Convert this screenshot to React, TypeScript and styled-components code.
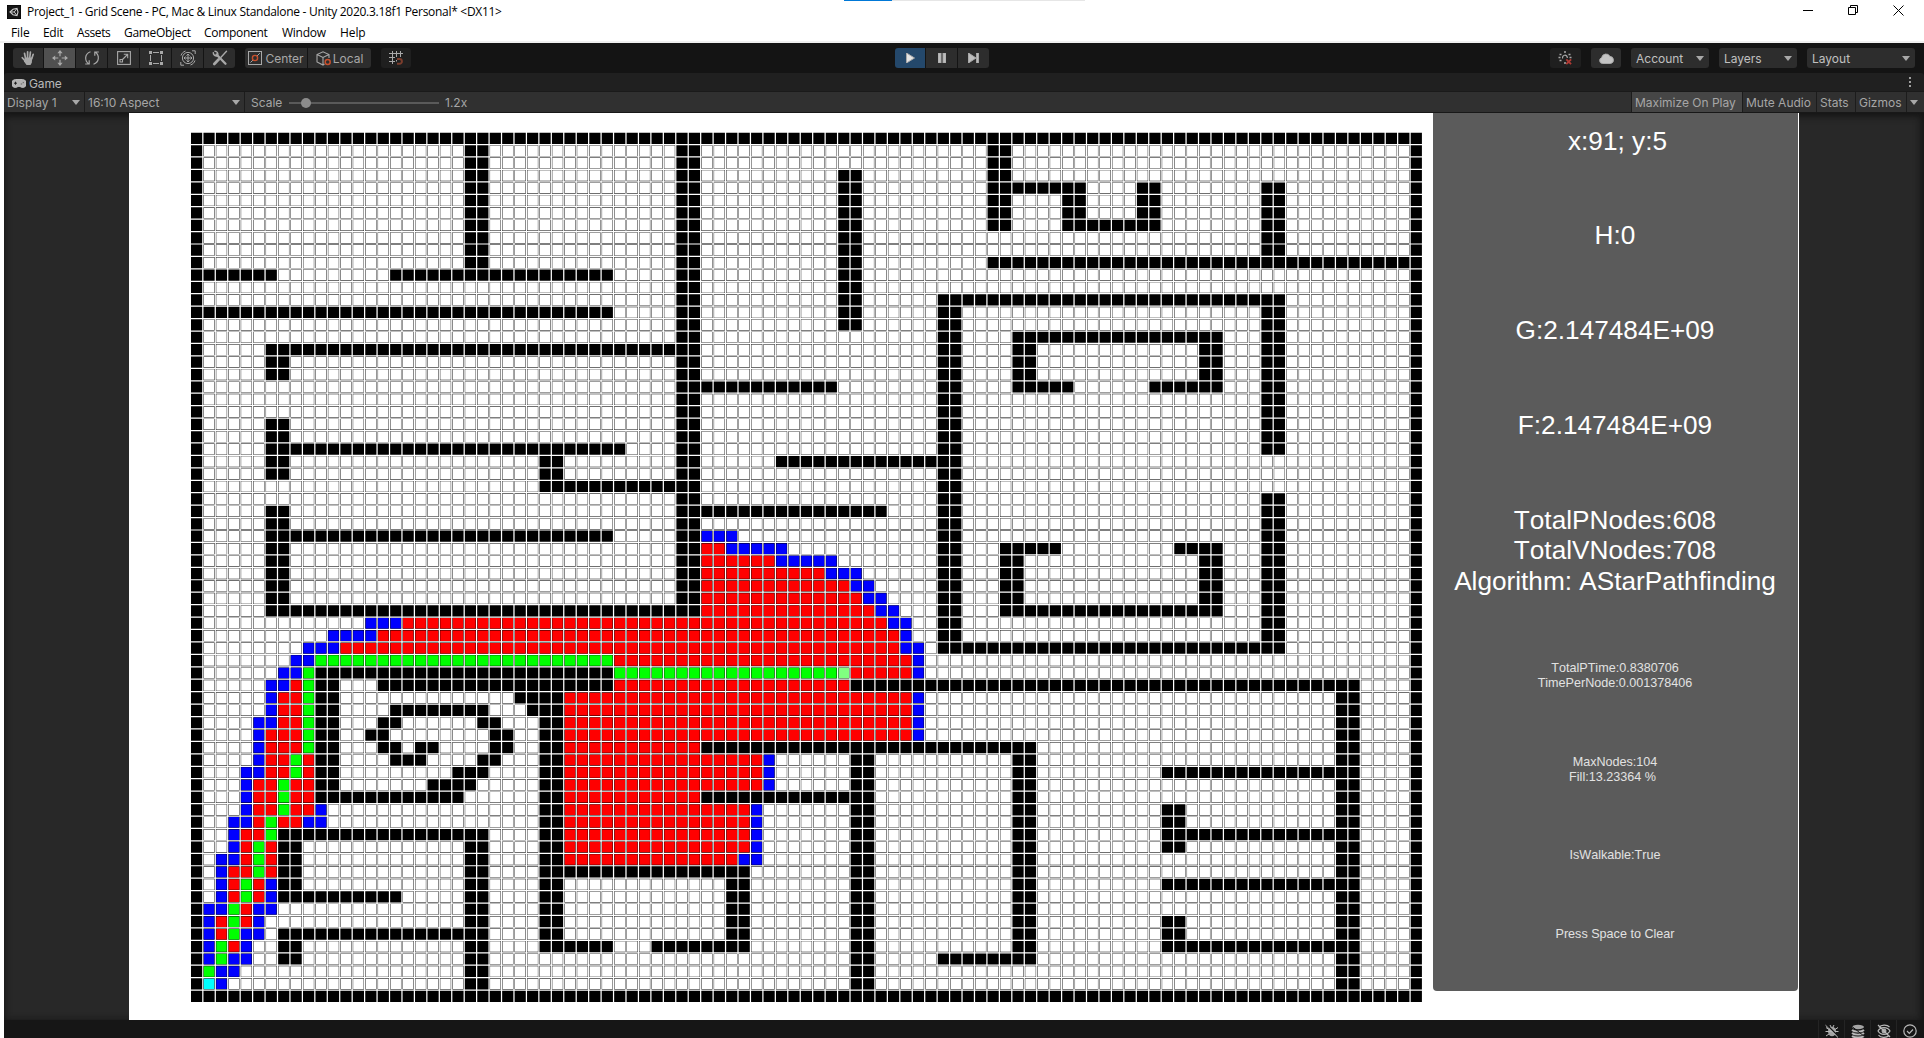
import React from "react";
import styled, { createGlobalStyle } from "styled-components";

const GlobalStyle = createGlobalStyle`
  html, body { margin: 0; padding: 0; background: #fff; }
  * { box-sizing: border-box; }
`;

/* ---------- grid map data ---------- */

const COLS = 99;
const ROWS = 70;
const PITCH_X = 12.446;
const PITCH_Y = 12.435;
const CELL = 11.2;
const EDGE = 0.36;

type Kind = "free" | "wall" | "open" | "closed" | "path" | "goal" | "start";

// [row from, row to, column from, column to]
type Block = [number, number, number, number];

const walls: Block[] = [
  [0, 0, 0, 98], [69, 69, 0, 98], [0, 69, 0, 0], [0, 69, 98, 98],
  [1, 10, 22, 23], [11, 11, 1, 6], [11, 11, 16, 33], [14, 14, 1, 33],
  [17, 17, 6, 38], [18, 19, 6, 7], [23, 27, 6, 7], [25, 25, 8, 34],
  [26, 28, 28, 29], [28, 28, 30, 38], [30, 38, 6, 7], [32, 32, 8, 33],
  [38, 38, 8, 38], [1, 38, 39, 40],
  [20, 20, 41, 51], [26, 26, 47, 59], [30, 30, 41, 55], [3, 15, 52, 53],
  [1, 7, 64, 65], [4, 4, 66, 71], [5, 7, 70, 71], [7, 7, 72, 77], [4, 7, 76, 77],
  [10, 10, 64, 98], [4, 9, 86, 87],
  [13, 13, 60, 87], [13, 41, 60, 61], [41, 41, 60, 87], [13, 25, 86, 87], [29, 41, 86, 87],
  [16, 16, 66, 82], [17, 20, 66, 67], [20, 20, 68, 70], [17, 20, 81, 82], [20, 20, 77, 80],
  [33, 33, 65, 69], [34, 38, 65, 66], [38, 38, 67, 82], [33, 33, 79, 82], [34, 38, 81, 82],
  [43, 43, 10, 33], [44, 53, 10, 11], [44, 44, 15, 33], [53, 53, 12, 21],
  [45, 45, 26, 29], [46, 46, 27, 29], [47, 65, 28, 29],
  [46, 46, 16, 23], [47, 47, 15, 16], [47, 47, 23, 24], [48, 48, 14, 15], [48, 49, 24, 25],
  [49, 49, 15, 16], [49, 49, 18, 19], [50, 50, 16, 18], [50, 50, 23, 24],
  [51, 51, 21, 23], [52, 52, 19, 22],
  [56, 56, 7, 23], [57, 68, 22, 23], [57, 60, 7, 8], [61, 61, 7, 16], [64, 64, 7, 21], [65, 66, 7, 8],
  [59, 59, 30, 44], [60, 65, 43, 44], [65, 65, 30, 33], [65, 65, 37, 42],
  [44, 44, 53, 93], [45, 68, 92, 93], [49, 49, 41, 67], [50, 66, 66, 67], [66, 66, 60, 65],
  [50, 68, 53, 54], [53, 53, 41, 52],
  [51, 51, 78, 91], [54, 57, 78, 79], [56, 56, 80, 91], [60, 60, 78, 91],
  [63, 65, 78, 79], [65, 65, 80, 91],
];

const frontier: Block[] = [
  [32, 32, 41, 43], [33, 33, 43, 47], [34, 34, 47, 51], [35, 35, 51, 53], [36, 36, 53, 54],
  [37, 37, 54, 55], [38, 38, 55, 56], [39, 39, 56, 57], [40, 40, 57, 57], [41, 41, 57, 58],
  [42, 43, 58, 58], [45, 48, 58, 58],
  [39, 39, 14, 16], [40, 40, 11, 14], [41, 41, 9, 11], [42, 42, 8, 9], [43, 43, 7, 8],
  [44, 44, 6, 7], [45, 46, 6, 6], [47, 47, 5, 6], [48, 50, 5, 5], [51, 51, 4, 5], [52, 54, 4, 4],
  [54, 54, 10, 10], [55, 55, 3, 4], [55, 55, 9, 10], [56, 57, 3, 3], [58, 58, 2, 3], [59, 61, 2, 2],
  [60, 61, 6, 6], [62, 62, 1, 2], [62, 62, 5, 6], [63, 66, 1, 1], [63, 63, 5, 5], [64, 64, 4, 5],
  [65, 65, 4, 4], [66, 66, 3, 4], [67, 67, 2, 3], [68, 68, 2, 2],
  [50, 52, 46, 46], [54, 58, 45, 45], [58, 58, 44, 44],
];

const visited: Block[] = [
  [33, 33, 41, 42], [34, 34, 41, 46], [35, 35, 41, 50], [36, 36, 41, 52], [37, 37, 41, 53],
  [38, 38, 41, 54], [39, 39, 17, 55], [40, 40, 15, 56], [41, 41, 12, 56], [42, 42, 34, 57],
  [43, 43, 53, 57], [44, 44, 34, 52], [45, 48, 30, 57], [49, 49, 30, 40], [50, 52, 30, 45],
  [53, 53, 30, 40], [54, 57, 30, 44], [58, 58, 30, 43],
  [44, 44, 8, 8], [45, 47, 7, 8], [48, 49, 6, 8], [50, 51, 6, 7], [50, 51, 9, 9],
  [52, 54, 5, 6], [52, 54, 8, 9], [55, 55, 5, 5], [55, 55, 7, 8], [56, 56, 4, 5], [57, 58, 4, 4],
  [57, 59, 6, 6], [59, 59, 3, 4], [60, 61, 3, 3], [60, 61, 5, 5], [62, 63, 4, 4], [63, 64, 2, 2],
  [65, 65, 3, 3],
];

const route: Block[] = [
  [42, 42, 10, 33], [43, 43, 34, 51], [43, 49, 9, 9], [50, 51, 8, 8], [52, 54, 7, 7],
  [55, 56, 6, 6], [57, 59, 5, 5], [60, 61, 4, 4], [62, 64, 3, 3], [65, 66, 2, 2], [67, 67, 1, 1],
];

const colours: Record<Kind, string> = {
  free: "#fff",
  wall: "#000",
  open: "#0000ff",
  closed: "#ff0000",
  path: "#00ff00",
  goal: "#80ff80",
  start: "#00ffff",
};

const board: Kind[][] = Array.from({ length: ROWS }, () => Array<Kind>(COLS).fill("free"));

const paint = (blocks: Block[], kind: Kind) =>
  blocks.forEach(([r0, r1, c0, c1]) => {
    for (let r = r0; r <= r1; r++) for (let c = c0; c <= c1; c++) board[r][c] = kind;
  });

paint(walls, "wall");
paint(visited, "closed");
paint(frontier, "open");
paint(route, "path");
paint([[43, 43, 52, 52]], "goal");
paint([[68, 68, 1, 1]], "start");

const square = (c: number, r: number, inset: number) => {
  const s = (CELL - inset * 2).toFixed(2);
  const x = (1.0 + c * PITCH_X + inset).toFixed(2);
  const y = (0.7 + r * PITCH_Y + inset).toFixed(2);
  return `M${x} ${y}h${s}v${s}h-${s}z`;
};

const frames = board.map((row, r) => row.map((_, c) => square(c, r, 0)).join("")).join("");
const fills = (kind: Kind) =>
  board.map((row, r) => row.map((k, c) => (k === kind ? square(c, r, EDGE) : "")).join("")).join("");

const kinds: Kind[] = ["free", "open", "closed", "path", "goal", "start"];

const GridMap = () => (
  <MapSvg width="1236" height="873" viewBox="0 0 1236 873">
    <path d={frames} fill="#000" />
    {kinds.map((k) => (
      <path key={k} d={fills(k)} fill={colours[k]} />
    ))}
  </MapSvg>
);

/* ---------- window frame ---------- */

const Window = styled.div`
  width: 1924px;
  height: 1038px;
  overflow: hidden;
  display: flex;
  flex-direction: column;
  background: #fff;
  font-family: Inter, "Liberation Sans", sans-serif;
`;

const LoadTrack = styled.div`
  height: 1px;
  width: 241px;
  margin-left: 844px;
  background: #e6e6e6;
`;
const LoadBar = styled.div`
  height: 1px;
  width: 48px;
  background: #0078d7;
`;

const Caption = styled.div`
  display: flex;
  height: 23px;
  padding: 0 0 2px 7px;
  align-items: center;
  font: 12px "Open Sans", "Noto Sans", sans-serif;
  color: #000;
`;
const CaptionText = styled.span`
  margin-left: 6px;
  letter-spacing: -0.29px;
  white-space: pre;
`;
const CaptionButtons = styled.div`
  margin-left: auto;
  display: flex;
  gap: 35px;
  padding-right: 20px;
  margin-top: -2px;
`;

const MenuBar = styled.nav`
  display: flex;
  height: 19px;
  padding-left: 11px;
  align-items: center;
  border-bottom: 2px solid #f0f0f0;
  font: 12px "Open Sans", "Noto Sans", sans-serif;
  color: #000;
`;
const MenuItem = styled.span<{ $w: number; $track: number }>`
  width: ${(p) => p.$w}px;
  letter-spacing: ${(p) => p.$track}px;
  white-space: nowrap;
`;

const Editor = styled.div`
  margin-left: 4px;
  flex: 1;
  display: flex;
  flex-direction: column;
  background: #141414;
  color: #b9b9b9;
  font-size: 12px;
`;

/* ---------- toolbar ---------- */

const Toolbar = styled.div`
  height: 30px;
  padding: 5px 9px 5px 9px;
  display: flex;
`;
const ToolGroup = styled.div<{ $ml?: number }>`
  display: flex;
  gap: 1px;
  margin-left: ${(p) => p.$ml ?? 0}px;
  border-radius: 3px;
  overflow: hidden;
`;
const ToolButton = styled.div<{ $w?: number; $bg?: string; $color?: string }>`
  width: ${(p) => p.$w ?? 31}px;
  height: 20px;
  display: flex;
  align-items: center;
  justify-content: center;
  gap: 2px;
  background: ${(p) => p.$bg ?? "#2d2d2d"};
  color: ${(p) => p.$color ?? "#a8a8a8"};
  white-space: nowrap;
`;
const DropButton = styled.div<{ $w: number }>`
  width: ${(p) => p.$w}px;
  height: 20px;
  margin-left: 10px;
  padding: 0 5px;
  display: flex;
  align-items: center;
  justify-content: space-between;
  background: #2d2d2d;
  border-radius: 3px;
  color: #c0c0c0;
`;
const Arrow = styled.i`
  border: 4px solid transparent;
  border-top: 5px solid #a8a8a8;
  border-bottom: 0;
`;

/* ---------- game tab ---------- */

const TabRow = styled.div`
  height: 19px;
  background: #202020;
  display: flex;
  align-items: center;
  padding: 3px 13px 0 8px;
  border-bottom: 1px solid #1a1a1a;
  border-radius: 3px 3px 0 0;
`;
const TabName = styled.span`
  margin-left: 3px;
  letter-spacing: -0.15px;
`;
const Dots = styled.div`
  margin-left: auto;
  margin-top: -3px;
  display: grid;
  gap: 2px;
`;
const Dot = styled.i`
  width: 2px;
  height: 2px;
  background: #a0a0a0;
`;

const ViewBar = styled.div`
  height: 21px;
  background: #303030;
  border-bottom: 1px solid #181818;
  display: flex;
  color: #a6a6a6;
`;
const ViewItem = styled.div<{ $w: number; $active?: boolean; $end?: boolean }>`
  width: ${(p) => p.$w}px;
  padding: 1px 4px 0 3px;
  display: flex;
  align-items: center;
  justify-content: space-between;
  white-space: nowrap;
  background: ${(p) => (p.$active ? "#464646" : "transparent")};
  border-right: ${(p) => (p.$end ? "0" : "1px solid #1c1c1c")};
`;
const ScaleBox = styled.div`
  display: flex;
  align-items: center;
  padding: 1px 0 0 6px;
  flex: 1;
  border-right: 1px solid #1c1c1c;
`;
const ScaleLabel = styled.span`
  width: 38px;
`;
const Track = styled.div`
  width: 150px;
  height: 2px;
  margin-right: 6px;
  background: #5a5a5a;
  display: flex;
  align-items: center;
  padding-left: 12px;
`;
const Knob = styled.i`
  width: 10px;
  height: 10px;
  border-radius: 50%;
  background: #8c8c8c;
`;

/* ---------- game view ---------- */

const GameView = styled.main`
  height: 907px;
  background: #282828;
  box-shadow: inset 0 3px 7px #151515, inset -4px 0 6px #1c1c1c;
  display: flex;
  padding-left: 125px;
`;
const Camera = styled.div`
  width: 1670px;
  height: 907px;
  background: #fff;
  display: flex;
  align-items: flex-start;
`;
const MapSvg = styled.svg`
  display: block;
  flex: none;
  margin: 19px 7px 0 61px;
`;
const InfoPanel = styled.aside`
  width: 365px;
  height: 878px;
  background: #5b5b5b;
  border-radius: 0 0 4px 4px;
  display: flex;
  flex-direction: column;
  align-items: center;
  gap: 64.6px;
  padding: 12.5px 1px 0 0;
  color: #fff;
  font-family: "Liberation Sans", Arial, sans-serif;
  font-kerning: none;
  text-align: center;
`;
const Readout = styled.div<{ $small?: boolean; $shift?: number; $pull?: number }>`
  font-size: ${(p) => (p.$small ? 12.6 : 26.2)}px;
  line-height: ${(p) => (p.$small ? 15 : 30.3)}px;
  color: ${(p) => (p.$small ? "#e2e2e2" : "#fff")};
  padding-left: ${(p) => p.$shift ?? 0}px;
  margin-top: ${(p) => -(p.$pull ?? 0)}px;
`;
const Line = styled.div<{ $back?: number }>`
  white-space: pre;
  padding-right: ${(p) => p.$back ?? 0}px;
`;

const StatusBar = styled.footer`
  height: 18px;
  background: #161616;
  display: flex;
  justify-content: flex-end;
  padding-right: 2px;
`;
const StatusItem = styled.div`
  width: 26px;
  height: 18px;
  border-left: 1px solid #242424;
  display: flex;
  align-items: center;
  justify-content: center;
  padding-top: 3px;
`;

/* ---------- icons ---------- */

const Ico = styled.svg`
  display: block;
  flex: none;
  fill: none;
  stroke: currentColor;
`;

const UnityMark = () => (
  <Ico width="14" height="14" viewBox="0 0 14 14" stroke="none">
    <rect width="14" height="14" fill="#161616" />
    <path d="M3 7 6 4.300 10 3.500 11 7 10 10.500 6 9.700Z" stroke="#ccc" strokeWidth="1.100" />
    <path d="M7.300 7H3.500M7.300 7l2.200-3M7.300 7l2.200 3" stroke="#ccc" strokeWidth="1" />
  </Ico>
);
const Hand = () => (
  <Ico width="16" height="16" viewBox="0 0 16 16" strokeLinecap="round">
    <path d="M5.600 8.500 4.500 3.300M7.600 7.500V1.800M9.800 7.500l.6-5.300M11.700 8.700l1.500-4.400M5.200 11 2.300 7.700" strokeWidth="1.700" />
    <path d="M5 7.500h7.300l-.5 5.200L10.500 15H6.500L4 11.500Z" fill="currentColor" stroke="none" />
  </Ico>
);
const Move = () => (
  <Ico width="16" height="16" viewBox="0 0 16 16">
    <path d="M8 2.500v3.800M8 9.700v3.800M2.500 8h3.800M9.700 8h3.800" strokeWidth="1.200" />
    <path d="M8 0l2.600 3.200H5.400ZM8 16l2.600-3.200H5.400ZM0 8l3.200-2.600v5.200ZM16 8l-3.200-2.600v5.200Z" fill="currentColor" stroke="none" />
  </Ico>
);
const Rotate = () => (
  <Ico width="16" height="16" viewBox="0 0 16 16" strokeWidth="1.200">
    <path d="M6.500 1.800C.5 4 .3 10.500 4.700 14M1.200 14h4V10.200M9.500 14.200c6-2.200 6.200-8.700 1.800-12.200M14.800 2h-4v3.800" />
  </Ico>
);
const ScaleIcon = () => (
  <Ico width="14" height="14" viewBox="0 0 14 14" strokeWidth="1.100">
    <rect x=".6" y=".6" width="12.800" height="12.800" />
    <path d="M3 11h2.500V8.500H3ZM5.500 8.500l5-5M6.800 3.300h3.900v3.900" />
  </Ico>
);
const RectTool = () => (
  <Ico width="14" height="14" viewBox="0 0 14 14" strokeWidth="1">
    <path d="M4 1.500h6M4 12.500h6M1.500 4v6M12.500 4v6" />
    <path d="M0 0h3v3H0ZM11 0h3v3h-3ZM0 11h3v3H0ZM11 11h3v3h-3Z" fill="currentColor" stroke="none" />
  </Ico>
);
const Transform = () => (
  <Ico width="16" height="16" viewBox="0 0 16 16" strokeWidth="1">
    <circle cx="8" cy="8" r="5.600" />
    <path d="M8 4v8M4 8h8M6.500 5.500 8 4l1.500 1.500M6.500 10.500 8 12l1.500-1.500M5.500 6.500 4 8l1.500 1.500M10.500 6.500 12 8l-1.500 1.500M12 .8h3.200V4M.8 12v3.200H4M1 5.500C2 3 3 2 5.500 1M15 10.500c-1 2.500-2 3.500-4.500 4.500" />
  </Ico>
);
const Tools = () => (
  <Ico width="16" height="16" viewBox="0 0 16 16" strokeLinecap="round">
    <path d="M4.500 4.500 13.500 13.700" strokeWidth="2.300" />
    <path d="M1.300 2.800a3 3 0 0 0 4.200 2.900M3 1.200a3 3 0 0 1 2.800 3.700" strokeWidth="1.500" />
    <path d="m14.500 1.300-5.500 5.900" strokeWidth="1.400" />
    <path d="m6.600 9.600-4.300 4.300" strokeWidth="2.800" />
  </Ico>
);
const PivotIcon = () => (
  <Ico width="15" height="14" viewBox="0 0 15 14" strokeWidth="1">
    <rect x=".5" y=".5" width="13" height="13" />
    <path d="M2.500 11.500 5 9M9 5l2.800-2.800" />
    <circle cx="7" cy="7" r="2.600" stroke="#c8502d" strokeWidth="1.400" />
  </Ico>
);
const CubeIcon = () => (
  <Ico width="15" height="15" viewBox="0 0 15 15" strokeWidth="1.100">
    <path d="M8.500 13 7 14 1 11V3.500L7 .8l6 2.700V7M1 3.500l6 3 6-3M7 6.500V14" />
    <circle cx="11.700" cy="11" r="2.500" stroke="#c8502d" strokeWidth="1.500" />
  </Ico>
);
const SnapIcon = () => (
  <Ico width="14" height="14" viewBox="0 0 14 14" strokeWidth="1" stroke="#7a7a7a">
    <path d="M3.500 0v13M7.500 0v6M11.500 0v6M0 2.500h14M0 6.500h6M0 10.500h6M7.500 9v1.500" />
    <path d="M8 8h2.500a2.400 2.400 0 0 1 0 4.800H8" stroke="#7c3d2c" strokeWidth="2" />
  </Ico>
);
const Play = () => (
  <Ico width="9" height="10" viewBox="0 0 9 10" stroke="none">
    <path d="M.5 0 8.500 5 .5 10Z" fill="#e4e4e4" />
  </Ico>
);
const Pause = () => (
  <Ico width="8" height="10" viewBox="0 0 8 10" stroke="none">
    <path d="M0 0h3v10H0ZM5 0h3v10H5Z" fill="#bdbdbd" />
  </Ico>
);
const Step = () => (
  <Ico width="11" height="10" viewBox="0 0 11 10" stroke="none">
    <path d="M.5 0 8 5 .5 10ZM8.600 0h2v10h-2Z" fill="#bdbdbd" />
  </Ico>
);
const Activity = () => (
  <Ico width="15" height="14" viewBox="0 0 15 14" stroke="#6a6a6a">
    <path d="M4.700 7.500a2.400 2.400 0 1 1 4.600-.5" strokeWidth="1.200" />
    <path d="M6 1h2M1.500 3.500h2M10.500 3.500h2M.5 6.500h2M11.500 6.500h2M1.500 9.500h2M6 12h2" strokeWidth="1.500" />
    <path d="m8.300 8.300 4.800 4.800M13.100 8.300l-4.800 4.800" stroke="#b03a34" strokeWidth="1.800" />
  </Ico>
);
const Cloud = () => (
  <Ico width="15" height="11" viewBox="0 0 15 11" stroke="none">
    <path d="M3.300 10.500A3 3 0 0 1 2.600 4.700 4.500 4.500 0 0 1 11 3.400a3.600 3.600 0 0 1 .7 7.100Z" fill="#c4c4c4" />
  </Ico>
);
const Pad = () => (
  <Ico width="14" height="9" viewBox="0 0 14 9" stroke="none">
    <path d="M3.500.5h7a3.500 3.900 0 0 1 0 8c-1.400 0-2-1.300-3.500-1.300S4.900 8.500 3.500 8.500a3.500 3.900 0 0 1 0-8Z" fill="#b4b4b4" />
    <path d="M2 4.200h3M3.500 2.700v3" stroke="#202020" />
    <circle cx="9.300" cy="5" r=".9" fill="#202020" />
    <circle cx="11.200" cy="3.600" r=".9" fill="#202020" />
  </Ico>
);
const BugOff = () => (
  <Ico width="14" height="14" viewBox="0 0 14 14" stroke="#a4a4a4">
    <ellipse cx="7" cy="7.500" rx="4" ry="4.800" fill="#a4a4a4" stroke="none" />
    <path d="M1 3.500l3 2M13 3.500l-3 2M.5 7.500h13M1 12l3-2M13 12l-3-2M5 1l1 2M9 1 8 3" />
    <path d="m1.500.5 12.500 12.500" stroke="#161616" strokeWidth="1.300" />
    <path d="m.5 1.200 12.500 12.300" />
  </Ico>
);
const StackOff = () => (
  <Ico width="14" height="14" viewBox="0 0 14 14" stroke="#a4a4a4">
    <ellipse cx="7" cy="3" rx="6" ry="2.200" fill="#a4a4a4" stroke="none" />
    <path d="M1 6c2.500 2.200 9.500 2.200 12 0M1 9c2.500 2.200 9.500 2.200 12 0M1 12c2.500 2 9.500 2 12 0" strokeWidth="1.900" />
    <path d="m1 2.500 12.500 10" stroke="#161616" strokeWidth="1" />
  </Ico>
);
const EyeOff = () => (
  <Ico width="14" height="14" viewBox="0 0 14 14" stroke="#a4a4a4">
    <path d="M1 7c2.500-4.500 9.500-4.500 12 0-2.500 4.500-9.500 4.500-12 0ZM2 3.500C4 .5 10 .5 12.500 3M1.500 11c2 3 8 3 10.500.5" strokeWidth="1.200" />
    <circle cx="7" cy="7" r="2" fill="#a4a4a4" />
    <path d="m1 1 12 12" strokeWidth="1.200" />
  </Ico>
);
const CheckRing = () => (
  <Ico width="14" height="14" viewBox="0 0 14 14" stroke="#a4a4a4">
    <circle cx="7" cy="7" r="6.200" strokeWidth="1.200" />
    <path d="m4 7 2.300 2.300L10 5.500" strokeWidth="1.200" />
  </Ico>
);

/* ---------- page ---------- */

const menu: [string, number, number][] = [
  ["File", 32, -0.1], ["Edit", 34, -0.3], ["Assets", 47, -0.4], ["GameObject", 80, -0.3],
  ["Component", 78, -0.3], ["Window", 58, -0.25], ["Help", 40, -0.1],
];

export default function App() {
  return (
    <>
      <GlobalStyle />
      <Window>
        <LoadTrack>
          <LoadBar />
        </LoadTrack>
        <Caption>
          <UnityMark />
          <CaptionText>{"Project_1 - Grid Scene - PC, Mac & Linux Standalone - Unity 2020.3.18f1 Personal* <DX11>"}</CaptionText>
          <CaptionButtons>
            <Ico width="10" height="10" viewBox="0 0 10 10" stroke="#000"><path d="M0 5.500h10" /></Ico>
            <Ico width="10" height="10" viewBox="0 0 10 10" stroke="#000"><path d="M.5 2.500h7v7h-7ZM2.500 2.500v-2h7v7h-2" /></Ico>
            <Ico width="11" height="11" viewBox="0 0 11 11" stroke="#000"><path d="m.5.5 10 10M10.500.5l-10 10" /></Ico>
          </CaptionButtons>
        </Caption>
        <MenuBar>
          {menu.map(([label, w, track]) => (
            <MenuItem key={label} $w={w} $track={track}>{label}</MenuItem>
          ))}
        </MenuBar>
        <Editor>
          <Toolbar>
            <ToolGroup>
              <ToolButton $w={30}><Hand /></ToolButton>
              <ToolButton $bg="#505050"><Move /></ToolButton>
              <ToolButton><Rotate /></ToolButton>
              <ToolButton><ScaleIcon /></ToolButton>
              <ToolButton><RectTool /></ToolButton>
              <ToolButton><Transform /></ToolButton>
              <ToolButton><Tools /></ToolButton>
            </ToolGroup>
            <ToolGroup $ml={10}>
              <ToolButton $w={62}><PivotIcon />Center</ToolButton>
              <ToolButton $w={63}><CubeIcon />Local</ToolButton>
            </ToolGroup>
            <ToolGroup $ml={10}>
              <ToolButton $w={30} $bg="#1f1f1f"><SnapIcon /></ToolButton>
            </ToolGroup>
            <ToolGroup $ml={484}>
              <ToolButton $w={30} $bg="#24486b"><Play /></ToolButton>
              <ToolButton><Pause /></ToolButton>
              <ToolButton><Step /></ToolButton>
            </ToolGroup>
            <ToolGroup $ml={561}>
              <ToolButton $bg="#1f1f1f"><Activity /></ToolButton>
            </ToolGroup>
            <ToolGroup $ml={10}>
              <ToolButton $w={30}><Cloud /></ToolButton>
            </ToolGroup>
            <DropButton $w={78}>Account<Arrow /></DropButton>
            <DropButton $w={78}>Layers<Arrow /></DropButton>
            <DropButton $w={108}>Layout<Arrow /></DropButton>
          </Toolbar>
          <TabRow>
            <Pad />
            <TabName>Game</TabName>
            <Dots><Dot /><Dot /><Dot /></Dots>
          </TabRow>
          <ViewBar>
            <ViewItem $w={81}>Display 1<Arrow /></ViewItem>
            <ViewItem $w={160}>16:10 Aspect<Arrow /></ViewItem>
            <ScaleBox>
              <ScaleLabel>Scale</ScaleLabel>
              <Track><Knob /></Track>
              1.2x
            </ScaleBox>
            <ViewItem $w={111} $active>Maximize On Play</ViewItem>
            <ViewItem $w={74}>Mute Audio</ViewItem>
            <ViewItem $w={39}>Stats</ViewItem>
            <ViewItem $w={51}>Gizmos</ViewItem>
            <ViewItem $w={17} $end><Arrow /></ViewItem>
          </ViewBar>
          <GameView>
            <Camera>
              <GridMap />
              <InfoPanel>
                <Readout $shift={5}><Line>x:91; y:5</Line></Readout>
                <Readout><Line>H:0</Line></Readout>
                <Readout><Line>G:2.147484E+09</Line></Readout>
                <Readout><Line>F:2.147484E+09</Line></Readout>
                <Readout>
                  <Line>TotalPNodes:608</Line>
                  <Line>TotalVNodes:708</Line>
                  <Line>Algorithm: AStarPathfinding</Line>
                </Readout>
                <Readout $small>
                  <Line>TotalPTime:0.8380706</Line>
                  <Line>TimePerNode:0.001378406</Line>
                </Readout>
                <Readout $small $pull={0.4}>
                  <Line>MaxNodes:104</Line>
                  <Line $back={5}>Fill:13.23364 %</Line>
                </Readout>
                <Readout $small $pull={1}><Line>IsWalkable:True</Line></Readout>
                <Readout $small $pull={0.5}><Line>Press Space to Clear</Line></Readout>
              </InfoPanel>
            </Camera>
          </GameView>
          <StatusBar>
            <StatusItem><BugOff /></StatusItem>
            <StatusItem><StackOff /></StatusItem>
            <StatusItem><EyeOff /></StatusItem>
            <StatusItem><CheckRing /></StatusItem>
          </StatusBar>
        </Editor>
      </Window>
    </>
  );
}
